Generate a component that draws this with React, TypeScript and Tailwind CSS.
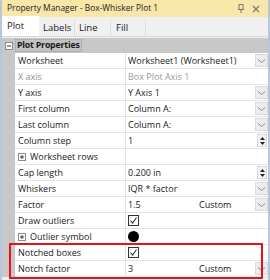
import React from 'react';

type Kind = 'drop' | 'spin' | 'none' | 'check' | 'dot';

interface Row {
  label: string;
  value?: string;
  extra?: string;
  kind: Kind;
  expand?: boolean;
  dim?: boolean;
}

const rows: Row[] = [
  { label: 'Worksheet', value: 'Worksheet1 (Worksheet1)', kind: 'drop' },
  { label: 'X axis', value: 'Box Plot Axis 1', kind: 'none', dim: true },
  { label: 'Y axis', value: 'Y Axis 1', kind: 'drop' },
  { label: 'First column', value: 'Column A:', kind: 'drop' },
  { label: 'Last column', value: 'Column A:', kind: 'drop' },
  { label: 'Column step', value: '1', kind: 'spin' },
  { label: 'Worksheet rows', kind: 'none', expand: true },
  { label: 'Cap length', value: '0.200 in', kind: 'spin' },
  { label: 'Whiskers', value: 'IQR * factor', kind: 'drop' },
  { label: 'Factor', value: '1.5', extra: 'Custom', kind: 'drop' },
  { label: 'Draw outliers', kind: 'check' },
  { label: 'Outlier symbol', kind: 'dot', expand: true },
  { label: 'Notched boxes', kind: 'check' },
  { label: 'Notch factor', value: '3', extra: 'Custom', kind: 'drop' },
];

const Chevron = () => (
  <svg width="9" height="6" viewBox="0 0 9 6" fill="none" stroke="#8a8a8a" strokeWidth="1">
    <path d="M1 1.5 L4.5 4.5 L8 1.5" />
  </svg>
);

const Spin = () => (
  <div className="flex flex-col items-center justify-center gap-[2px] w-[10px] h-[13px] bg-[#f4f4f4] border border-[#d6d6d6] ml-[2px]">
    <svg width="5" height="3" viewBox="0 0 5 3"><path d="M0 3 L2.5 0 L5 3Z" fill="#222" /></svg>
    <svg width="5" height="3" viewBox="0 0 5 3"><path d="M0 0 L2.5 3 L5 0Z" fill="#222" /></svg>
  </div>
);

const Box = ({ sign }: { sign: '+' | '-' }) => (
  <span className="inline-flex items-center justify-center w-[8px] h-[8px] border border-[#8c8c8c] bg-white shrink-0">
    <svg width="4" height="4" viewBox="0 0 4 4">
      <path d="M0 2 H4" stroke="#333" strokeWidth="1" />
      {sign === '+' && <path d="M2 0 V4" stroke="#333" strokeWidth="1" />}
    </svg>
  </span>
);

const Check = () => (
  <span className="inline-flex items-center justify-center w-[11px] h-[11px] border border-[#333] bg-white">
    <svg width="9" height="9" viewBox="0 0 9 9" fill="none" stroke="#333" strokeWidth="1.1">
      <path d="M1.5 4.5 L3.6 7 L7.5 1.5" />
    </svg>
  </span>
);

export default function App() {
  return (
    <div
      className="w-[270px] h-[280px] overflow-hidden bg-[#b8c6dc] flex flex-col text-[9px] text-[#1a1a1a]"
      style={{ fontFamily: '"Open Sans", "Noto Sans", sans-serif' }}
    >
      <div className="h-[17px] shrink-0 bg-[#f8e7a8] flex items-center pl-[5px] pr-[8px] mx-[2px]">
        <span className="flex-1 text-[8.4px] text-[#222] whitespace-nowrap">Property Manager - Box-Whisker Plot 1</span>
        <svg width="8" height="9" viewBox="0 0 8 9" className="mr-[7px]" fill="none" stroke="#777" strokeWidth="1">
          <path d="M2 0.5 V5 M6 0.5 V5 M1 5.5 H7 M4 5.5 V9 M2 0.5 H6" />
        </svg>
        <svg width="8" height="8" viewBox="0 0 8 8" stroke="#777" strokeWidth="1.1">
          <path d="M1 1 L7 7 M7 1 L1 7" />
        </svg>
      </div>

      <div className="h-[20px] shrink-0 mx-[2px] bg-[#f0f0f0] flex items-end border-b border-[#d9d9d9]">
        <div className="h-[20px] w-[37px] bg-white flex items-center pl-[5px] text-[9.5px]">Plot</div>
        <div className="h-[16px] w-[36px] border-r border-[#dcdcdc] flex items-center pl-[4px] text-[9.5px]">Labels</div>
        <div className="h-[16px] w-[36px] border-r border-[#dcdcdc] flex items-center pl-[4px] text-[9.5px]">Line</div>
        <div className="h-[16px] w-[35px] border-r border-[#dcdcdc] flex items-center pl-[5px] text-[9.5px]">Fill</div>
      </div>

      <div className="flex-1 mx-[2px] bg-[#f0f0f0] pt-[1px] relative">
        <div className="h-[15px] bg-[#c8c8c8] flex items-center">
          <div className="w-[13px] flex justify-center"><Box sign="-" /></div>
          <span className="font-bold text-[8.8px] tracking-[-0.2px] px-[1px] bg-[#c2c2c2] border border-dotted border-[#9a9a9a] leading-[11px]">Plot Properties</span>
        </div>
        <div className="flex">
          <div className="w-[13px] bg-[#c8c8c8] shrink-0" />
          <div className="flex-1 bg-white">
            {rows.map((r) => (
              <div key={r.label} className="h-[16px] flex border-b border-[#e3e3e3]">
                <div
                  className={`w-[111px] shrink-0 flex items-center pl-[3px] border-r border-[#e3e3e3] gap-[4px] whitespace-nowrap ${r.dim ? 'text-[#8f8f8f]' : ''}`}
                >
                  {r.expand && <Box sign="+" />}
                  <span>{r.label}</span>
                </div>
                <div className="flex-1 flex items-center pl-[2px] whitespace-nowrap overflow-hidden">
                  {r.kind === 'check' && <Check />}
                  {r.kind === 'dot' && <span className="w-[11px] h-[11px] rounded-full bg-black" />}
                  {r.value && (
                    <span className={r.dim ? 'text-[#9a9a9a] min-w-[71px]' : 'min-w-[71px]'}>{r.value}</span>
                  )}
                  {r.extra && <span>{r.extra}</span>}
                </div>
                <div className="w-[14px] shrink-0 flex items-center justify-center">
                  {r.kind === 'drop' && (
                    <div className="w-[13px] h-[13px] bg-[#ececec] border border-[#dadada] flex items-center justify-center">
                      <Chevron />
                    </div>
                  )}
                  {r.kind === 'spin' && <Spin />}
                </div>
              </div>
            ))}
          </div>
        </div>
        <div className="absolute left-[7px] top-[206px] w-[254px] h-[36px] border-2 border-[#e8101a] pointer-events-none" />
      </div>
    </div>
  );
}
